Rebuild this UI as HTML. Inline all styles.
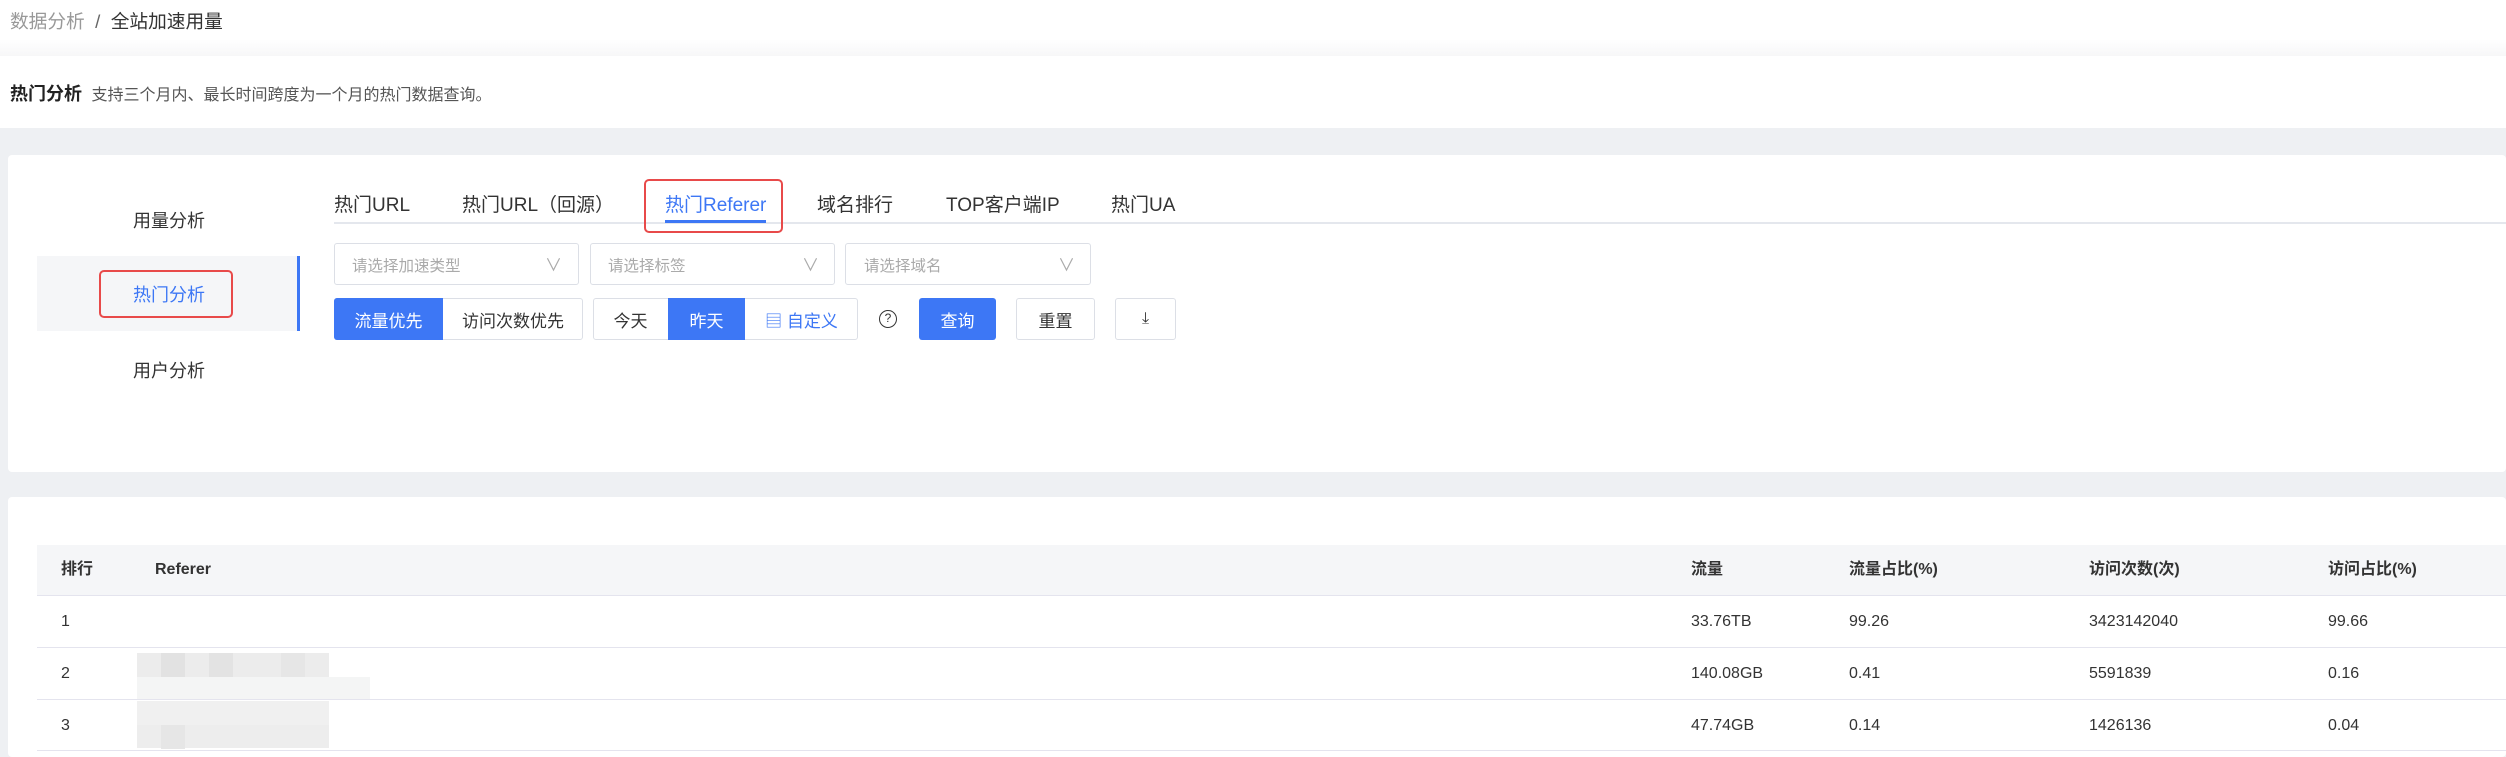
<!DOCTYPE html>
<html><head><meta charset="utf-8"><style>
*{margin:0;padding:0;box-sizing:border-box}
body{width:2506px;height:757px;overflow:hidden;background:#eef0f3;font-family:"Liberation Sans","Noto Sans CJK SC",sans-serif;color:#333;position:relative}
.a{position:absolute;white-space:nowrap}
.blue{color:#3d77f5}
.box{position:absolute;border:1px solid #dcdfe6;border-radius:3px;background:#fff}
.btn{position:absolute;display:flex;align-items:center;justify-content:center;font-size:17px}
.mz{position:absolute;width:24px;height:24px}
.t{line-height:22px;height:22px}
</style></head><body>
<div class="a" style="left:0;top:0;width:2506px;height:56px;background:linear-gradient(#fff 70%,#f7f7f8)"></div>
<div class="a" style="left:10px;top:7px;font-size:18.7px;color:#999">数据分析 <span style="color:#666">&nbsp;/&nbsp;</span> <span style="color:#333">全站加速用量</span></div>
<div class="a" style="left:0;top:56px;width:2506px;height:72px;background:#fff"></div>
<div class="a" style="left:10px;top:80px;font-size:18px"><b style="color:#222">热门分析</b> <span style="font-size:16px;color:#555">&nbsp;支持三个月内、最长时间跨度为一个月的热门数据查询。</span></div>

<div class="a" style="left:8px;top:155px;width:2498px;height:317px;background:#fff;border-radius:4px"></div>
<div class="a" style="left:133px;top:207px;font-size:18px">用量分析</div>
<div class="a" style="left:37px;top:256px;width:263px;height:75px;background:#f5f6f8;border-right:3px solid #3d77f5"></div>
<div class="a" style="left:99px;top:270px;width:134px;height:48px;border:2px solid #e84a4a;border-radius:5px"></div>
<div class="a blue" style="left:133px;top:281px;font-size:18px">热门分析</div>
<div class="a" style="left:133px;top:357px;font-size:18px">用户分析</div>

<div class="a" style="left:334px;top:222px;width:2172px;height:2px;background:#e4e7ed"></div>
<div class="a" style="left:334px;top:190px;font-size:19px">热门URL</div>
<div class="a" style="left:462px;top:190px;font-size:19px">热门URL（回源）</div>
<div class="a blue" style="left:665px;top:190px;font-size:19px">热门Referer</div>
<div class="a" style="left:665px;top:220px;width:101px;height:3px;background:#3d77f5"></div>
<div class="a" style="left:644px;top:179px;width:139px;height:54px;border:2px solid #e84a4a;border-radius:5px"></div>
<div class="a" style="left:817px;top:190px;font-size:19px">域名排行</div>
<div class="a" style="left:946px;top:190px;font-size:19px">TOP客户端IP</div>
<div class="a" style="left:1111px;top:190px;font-size:19px">热门UA</div>

<div class="box" style="left:334px;top:243px;width:245px;height:42px"></div>
<div class="a" style="left:352px;top:254px;font-size:15.5px;color:#aaa">请选择加速类型</div><div class="a" style="left:545px;top:251px;font-size:17px;color:#aaa">∨</div>
<div class="box" style="left:590px;top:243px;width:245px;height:42px"></div>
<div class="a" style="left:608px;top:254px;font-size:15.5px;color:#aaa">请选择标签</div><div class="a" style="left:802px;top:251px;font-size:17px;color:#aaa">∨</div>
<div class="box" style="left:845px;top:243px;width:246px;height:42px"></div>
<div class="a" style="left:864px;top:254px;font-size:15.5px;color:#aaa">请选择域名</div><div class="a" style="left:1058px;top:251px;font-size:17px;color:#aaa">∨</div>

<div class="box" style="left:334px;top:298px;width:249px;height:42px"></div>
<div class="btn" style="left:334px;top:298px;width:109px;height:42px;background:#3d77f5;color:#fff;border-radius:3px 0 0 3px">流量优先</div>
<div class="btn" style="left:443px;top:298px;width:140px;height:42px">访问次数优先</div>
<div class="box" style="left:593px;top:298px;width:265px;height:42px"></div>
<div class="btn" style="left:593px;top:298px;width:75px;height:42px">今天</div>
<div class="btn" style="left:668px;top:298px;width:77px;height:42px;background:#3d77f5;color:#fff">昨天</div>
<div class="btn blue" style="left:745px;top:298px;width:113px;height:42px">▤ 自定义</div>
<div class="a" style="left:879px;top:310px;width:18px;height:18px;border:1.5px solid #333;border-radius:50%;font-size:12px;text-align:center;line-height:15px">?</div>
<div class="btn" style="left:919px;top:298px;width:77px;height:42px;background:#3d77f5;color:#fff;border-radius:3px">查询</div>
<div class="box" style="left:1016px;top:298px;width:79px;height:42px"></div><div class="btn" style="left:1016px;top:298px;width:79px;height:42px">重置</div>
<div class="box" style="left:1115px;top:298px;width:61px;height:42px"></div><div class="btn" style="left:1115px;top:298px;width:61px;height:42px;font-size:16px">⤓</div>

<div class="a" style="left:8px;top:497px;width:2498px;height:260px;background:#fff;border-radius:4px"></div>
<div class="a" style="left:37px;top:545px;width:2469px;height:51px;background:#f5f6f8;border-bottom:1px solid #e4e4ee"></div>
<div class="a" style="left:37px;top:647px;width:2469px;height:1px;background:#e4e4ee"></div>
<div class="a" style="left:37px;top:699px;width:2469px;height:1px;background:#e4e4ee"></div>
<div class="a" style="left:37px;top:750px;width:2469px;height:1px;background:#e4e4ee"></div>
<div style="font-size:16px;font-weight:bold">
<div class="a t" style="left:61px;top:559px">排行</div>
<div class="a t" style="left:155px;top:559px">Referer</div>
<div class="a t" style="left:1691px;top:559px">流量</div>
<div class="a t" style="left:1849px;top:559px">流量占比(%)</div>
<div class="a t" style="left:2089px;top:559px">访问次数(次)</div>
<div class="a t" style="left:2328px;top:559px">访问占比(%)</div>
</div>
<div style="font-size:16px;color:#333">
<div class="a t" style="left:61px;top:611px">1</div><div class="a t" style="left:1691px;top:611px">33.76TB</div><div class="a t" style="left:1849px;top:611px">99.26</div><div class="a t" style="left:2089px;top:611px">3423142040</div><div class="a t" style="left:2328px;top:611px">99.66</div>
<div class="a t" style="left:61px;top:663px">2</div><div class="a t" style="left:1691px;top:663px">140.08GB</div><div class="a t" style="left:1849px;top:663px">0.41</div><div class="a t" style="left:2089px;top:663px">5591839</div><div class="a t" style="left:2328px;top:663px">0.16</div>
<div class="a t" style="left:61px;top:715px">3</div><div class="a t" style="left:1691px;top:715px">47.74GB</div><div class="a t" style="left:1849px;top:715px">0.14</div><div class="a t" style="left:2089px;top:715px">1426136</div><div class="a t" style="left:2328px;top:715px">0.04</div>
</div>
<div class="a" style="left:137px;top:653px;width:192px;height:24px;background:#ececec"></div>
<div class="mz" style="left:161px;top:653px;background:#e2e2e2"></div><div class="mz" style="left:209px;top:653px;background:#e3e3e3"></div><div class="mz" style="left:281px;top:653px;background:#e6e6e6"></div>
<div class="a" style="left:137px;top:677px;width:233px;height:22px;background:#f4f5f5"></div>
<div class="a" style="left:137px;top:701px;width:192px;height:24px;background:#f0f0f0"></div>
<div class="a" style="left:137px;top:725px;width:192px;height:23px;background:#ededed"></div>
<div class="mz" style="left:161px;top:725px;background:#e6e6e6"></div>
</body></html>
